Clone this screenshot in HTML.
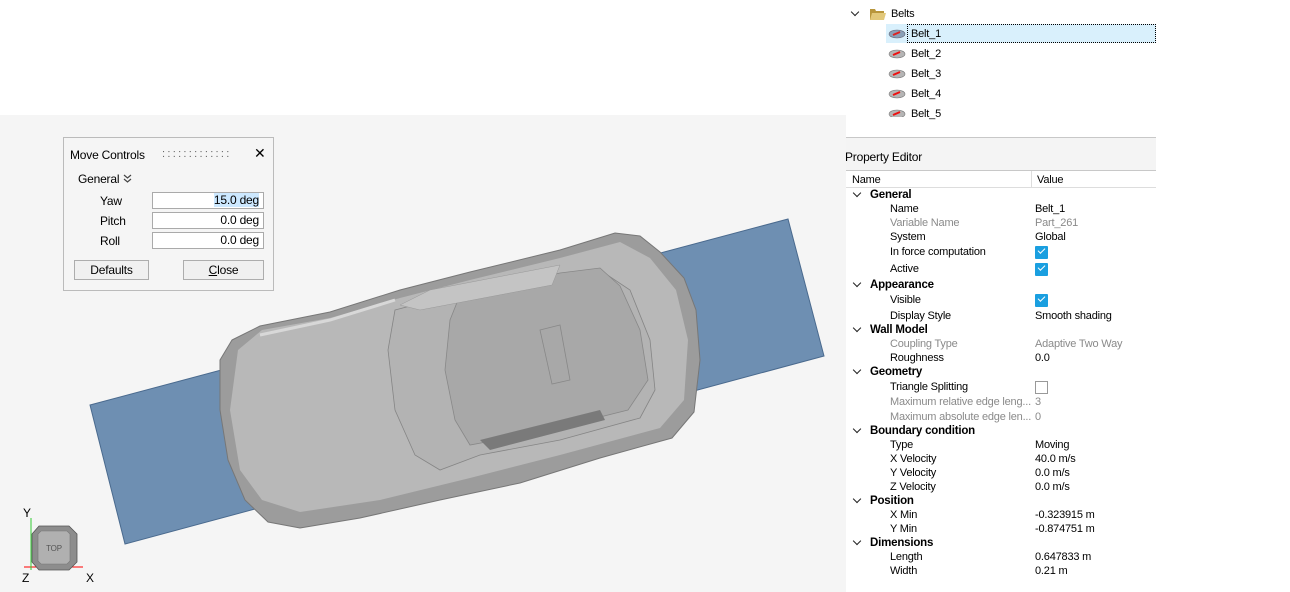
<!DOCTYPE html>
<html><head><meta charset="utf-8"><style>
*{margin:0;padding:0;box-sizing:border-box}
body{width:1290px;height:592px;background:#fff;font-family:"Liberation Sans",sans-serif;font-size:11px;color:#000;position:relative;overflow:hidden;letter-spacing:-0.2px}
.a{position:absolute;white-space:nowrap;line-height:13px;margin-top:1px}
.g{color:#8a8a8a}
.b{font-weight:bold;font-size:11.5px}
.cb{position:absolute;width:13px;height:13px;background:#1a9fe0;border-radius:1px}
.cb:after{content:"";position:absolute;left:3px;top:2px;width:6px;height:3px;border-left:1.5px solid #fff;border-bottom:1.5px solid #fff;transform:rotate(-45deg)}
.chev{position:absolute;width:6px;height:6px;border-right:1.8px solid #222;border-bottom:1.8px solid #222;transform:rotate(45deg)}
.inp{position:absolute;height:17px;border:1px solid #aaa;background:#fff;text-align:right;padding-right:4px;line-height:15px;font-size:12px}
.btn{position:absolute;height:20px;border:1px solid #adadad;background:#f0f0f0;text-align:center;line-height:18px;font-size:12px}
</style></head><body>
<div style="position:absolute;left:0;top:115px;width:846px;height:477px;background:#f5f5f5"></div>
<svg style="position:absolute;left:0;top:0" width="846" height="592">
<polygon points="90,405 788,219 824,356 125,544" fill="#6e8fb2" stroke="#4a6a8e" stroke-width="1"/>
<path d="M232,340 L260,326 L330,312 L400,290 L470,272 L560,250 L615,233 L640,236 L660,252 L684,278 L696,310 L700,360 L694,412 L672,438 L600,458 L520,483 L440,500 L360,518 L300,528 L268,522 L245,500 L228,460 L220,410 L220,360 Z" fill="#9c9c9c" stroke="#777" stroke-width="1"/>
<path d="M240,470 L230,410 L238,350 L262,330 L330,318 L400,298 L470,280 L560,258 L620,242 L650,258 L676,290 L688,340 L684,400 L660,428 L560,455 L470,478 L380,500 L300,512 L262,500 Z" fill="#b8b8b8"/>
<path d="M395,310 L460,293 L560,275 L600,270 L630,290 L650,340 L655,390 L640,418 L560,440 L480,455 L440,470 L415,455 L395,410 L388,350 Z" fill="#b3b3b3" stroke="#858585" stroke-width="0.8"/>
<path d="M460,295 L560,273 L600,268 L620,286 L640,330 L648,380 L628,410 L540,432 L470,445 L455,420 L445,370 L450,320 Z" fill="#a8a8a8" stroke="#888" stroke-width="0.8"/>
<path d="M540,330 L560,325 L570,380 L552,384 Z" fill="none" stroke="#888" stroke-width="0.8"/>
<path d="M480,440 L600,410 L605,420 L490,450 Z" fill="#7a7a7a"/>
<path d="M400,305 L430,290 L560,265 L552,285 L420,310 Z" fill="#c4c4c4" stroke="#999" stroke-width="0.5"/>
<path d="M260,335 L330,320 L395,300" fill="none" stroke="#d8d8d8" stroke-width="3"/>
<line x1="24" y1="567" x2="83" y2="567" stroke="#f00" stroke-width="1"/>
<line x1="31" y1="518" x2="31" y2="570" stroke="#3c3" stroke-width="1"/>
<polygon points="39,526 69,526 77,534 77,562 69,570 39,570 32,562 32,534" fill="#8d8d8d" stroke="#555" stroke-width="0.8"/>
<polygon points="41,531 67,531 70,534 70,561 67,564 41,564 38,561 38,534" fill="#b0b0b0" stroke="#777" stroke-width="0.6"/>
<text x="54" y="551" font-size="8" fill="#555" text-anchor="middle" font-family="Liberation Sans">TOP</text>
<text x="23" y="517" font-size="12" font-family="Liberation Sans">Y</text>
<text x="22" y="582" font-size="12" font-family="Liberation Sans">Z</text>
<text x="86" y="582" font-size="12" font-family="Liberation Sans">X</text>
</svg>
<!-- Move controls -->
<div style="position:absolute;left:63px;top:137px;width:211px;height:154px;background:#f5f5f5;border:1px solid #bbb"></div>
<div class="a" style="left:70px;top:148px;font-size:12px">Move Controls</div>
<div class="a" style="left:162px;top:149px;letter-spacing:2.3px;color:#666;line-height:8px">:::::::::::::</div>
<div class="a" style="left:254px;top:146px;font-size:14px">✕</div>
<div class="a" style="left:78px;top:172px;font-size:12px">General</div>
<svg style="position:absolute;left:123px;top:174px" width="9" height="10"><path d="M1,1 L4.5,4 L8,1 M1,5 L4.5,8 L8,5" fill="none" stroke="#444" stroke-width="1.2"/></svg>
<div class="a" style="left:100px;top:194px;font-size:12px">Yaw</div>
<div class="a" style="left:100px;top:214px;font-size:12px">Pitch</div>
<div class="a" style="left:100px;top:234px;font-size:12px">Roll</div>
<div class="inp" style="left:152px;top:192px;width:112px"><span style="background:#cce8ff">15.0 deg</span></div>
<div class="inp" style="left:152px;top:212px;width:112px">0.0 deg</div>
<div class="inp" style="left:152px;top:232px;width:112px">0.0 deg</div>
<div class="btn" style="left:74px;top:260px;width:75px">Defaults</div>
<div class="btn" style="left:183px;top:260px;width:81px"><u>C</u>lose</div>
<!-- tree -->
<div class="chev" style="left:852px;top:9px"></div>
<svg style="position:absolute;left:869px;top:7px" width="18" height="14"><path d="M1,2 L6,2 L7,4 L15,4 L15,13 L1,13 Z" fill="#b8963c"/><path d="M3,6 L17,6 L15,13 L1,13 Z" fill="#e2c87a"/></svg>
<div class="a" style="left:891px;top:7px">Belts</div>
<div style="position:absolute;left:886px;top:24px;width:270px;height:19px;background:#d9f0fc"></div>
<div style="position:absolute;left:907px;top:24px;width:249px;height:19px;border:1px dotted #000"></div>
<svg style="position:absolute;left:888px;top:27px" width="20" height="90">
<g><ellipse cx="9" cy="7" rx="8" ry="4" fill="#8aa0b8" stroke="#667" stroke-width="0.6"/><line x1="5" y1="8" x2="12" y2="5" stroke="#d22" stroke-width="2"/></g>
<g transform="translate(0,20)"><ellipse cx="9" cy="7" rx="8" ry="4" fill="#b5b5b5" stroke="#777" stroke-width="0.6"/><line x1="5" y1="8" x2="12" y2="5" stroke="#e11" stroke-width="2"/></g>
<g transform="translate(0,40)"><ellipse cx="9" cy="7" rx="8" ry="4" fill="#b5b5b5" stroke="#777" stroke-width="0.6"/><line x1="5" y1="8" x2="12" y2="5" stroke="#e11" stroke-width="2"/></g>
<g transform="translate(0,60)"><ellipse cx="9" cy="7" rx="8" ry="4" fill="#b5b5b5" stroke="#777" stroke-width="0.6"/><line x1="5" y1="8" x2="12" y2="5" stroke="#e11" stroke-width="2"/></g>
<g transform="translate(0,80)"><ellipse cx="9" cy="7" rx="8" ry="4" fill="#b5b5b5" stroke="#777" stroke-width="0.6"/><line x1="5" y1="8" x2="12" y2="5" stroke="#e11" stroke-width="2"/></g>
</svg>
<div class="a" style="left:911px;top:27px">Belt_1</div>
<div class="a" style="left:911px;top:47px">Belt_2</div>
<div class="a" style="left:911px;top:67px">Belt_3</div>
<div class="a" style="left:911px;top:87px">Belt_4</div>
<div class="a" style="left:911px;top:107px">Belt_5</div>
<!-- property editor -->
<div style="position:absolute;left:846px;top:137px;width:310px;height:34px;background:#f4f4f4;border-top:1px solid #c8c8c8;border-bottom:1px solid #c8c8c8"></div>
<div class="a" style="left:845px;top:150px;font-size:12px">Property Editor</div>
<div style="position:absolute;left:846px;top:187px;width:310px;height:1px;background:#ddd"></div>
<div style="position:absolute;left:1031px;top:171px;width:1px;height:16px;background:#ddd"></div>
<div class="a" style="left:852px;top:173px">Name</div>
<div class="a" style="left:1037px;top:173px">Value</div>
<div class="chev" style="left:854px;top:190px"></div><div class="a b" style="left:870px;top:188px">General</div>
<div class="a" style="left:890px;top:202px">Name</div><div class="a" style="left:1035px;top:202px">Belt_1</div>
<div class="a g" style="left:890px;top:216px">Variable Name</div><div class="a g" style="left:1035px;top:216px">Part_261</div>
<div class="a" style="left:890px;top:230px">System</div><div class="a" style="left:1035px;top:230px">Global</div>
<div class="a" style="left:890px;top:245px">In force computation</div><div class="cb" style="left:1035px;top:246px"></div>
<div class="a" style="left:890px;top:262px">Active</div><div class="cb" style="left:1035px;top:263px"></div>
<div class="chev" style="left:854px;top:280px"></div><div class="a b" style="left:870px;top:278px">Appearance</div>
<div class="a" style="left:890px;top:293px">Visible</div><div class="cb" style="left:1035px;top:294px"></div>
<div class="a" style="left:890px;top:309px">Display Style</div><div class="a" style="left:1035px;top:309px">Smooth shading</div>
<div class="chev" style="left:854px;top:325px"></div><div class="a b" style="left:870px;top:323px">Wall Model</div>
<div class="a g" style="left:890px;top:337px">Coupling Type</div><div class="a g" style="left:1035px;top:337px">Adaptive Two Way</div>
<div class="a" style="left:890px;top:351px">Roughness</div><div class="a" style="left:1035px;top:351px">0.0</div>
<div class="chev" style="left:854px;top:367px"></div><div class="a b" style="left:870px;top:365px">Geometry</div>
<div class="a" style="left:890px;top:380px">Triangle Splitting</div><div style="position:absolute;left:1035px;top:381px;width:13px;height:13px;border:1px solid #999;background:#fff"></div>
<div class="a g" style="left:890px;top:395px">Maximum relative edge leng...</div><div class="a g" style="left:1035px;top:395px">3</div>
<div class="a g" style="left:890px;top:410px">Maximum absolute edge len...</div><div class="a g" style="left:1035px;top:410px">0</div>
<div class="chev" style="left:854px;top:426px"></div><div class="a b" style="left:870px;top:424px">Boundary condition</div>
<div class="a" style="left:890px;top:438px">Type</div><div class="a" style="left:1035px;top:438px">Moving</div>
<div class="a" style="left:890px;top:452px">X Velocity</div><div class="a" style="left:1035px;top:452px">40.0 m/s</div>
<div class="a" style="left:890px;top:466px">Y Velocity</div><div class="a" style="left:1035px;top:466px">0.0 m/s</div>
<div class="a" style="left:890px;top:480px">Z Velocity</div><div class="a" style="left:1035px;top:480px">0.0 m/s</div>
<div class="chev" style="left:854px;top:496px"></div><div class="a b" style="left:870px;top:494px">Position</div>
<div class="a" style="left:890px;top:508px">X Min</div><div class="a" style="left:1035px;top:508px">-0.323915 m</div>
<div class="a" style="left:890px;top:522px">Y Min</div><div class="a" style="left:1035px;top:522px">-0.874751 m</div>
<div class="chev" style="left:854px;top:538px"></div><div class="a b" style="left:870px;top:536px">Dimensions</div>
<div class="a" style="left:890px;top:550px">Length</div><div class="a" style="left:1035px;top:550px">0.647833 m</div>
<div class="a" style="left:890px;top:564px">Width</div><div class="a" style="left:1035px;top:564px">0.21 m</div>
</body></html>
